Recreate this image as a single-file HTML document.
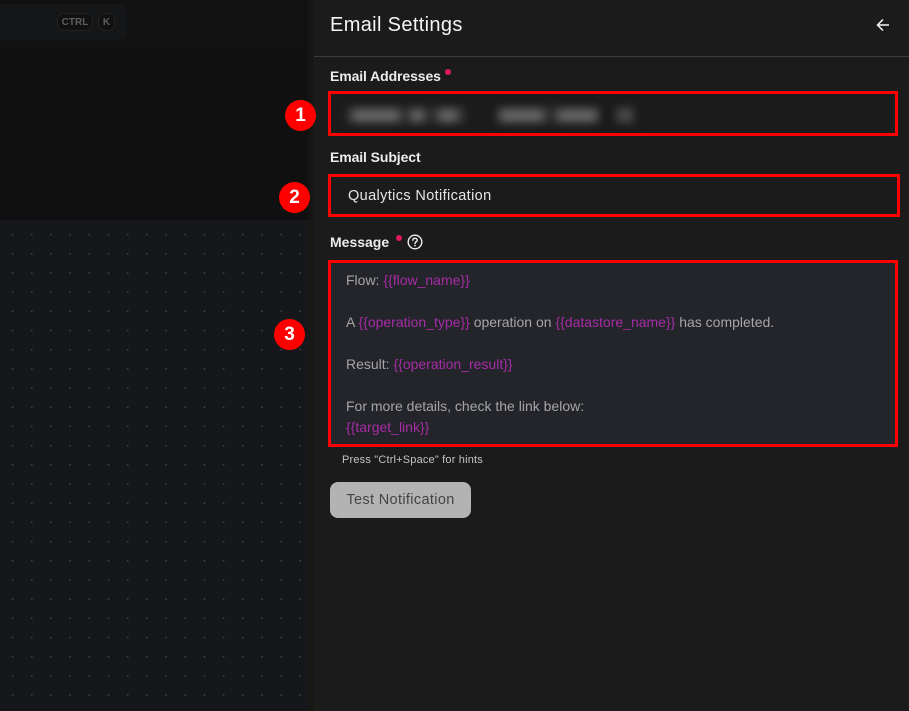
<!DOCTYPE html>
<html><head><meta charset="utf-8"><style>
html,body{margin:0;padding:0;background:#1b1b1b}
body{width:909px;height:711px;position:relative;overflow:hidden;font-family:"Liberation Sans",sans-serif}
.a{position:absolute}
.t{position:absolute;white-space:nowrap}
.lbl{font-size:14px;font-weight:700;color:#ececec;line-height:16px;left:330px;letter-spacing:-.1px}
.box{position:absolute;box-sizing:border-box;border:3px solid #f00}
.n{position:absolute;width:31px;height:31px;border-radius:50%;background:#f00;color:#fff;font-size:19px;font-weight:700;line-height:31px;text-align:center}
.m{position:absolute;left:346px;font-size:14px;line-height:20px;color:#a6a6a6;white-space:nowrap}
.m b{font-weight:400;color:#a62ca6}
.dot{position:absolute;width:6px;height:6px;border-radius:50%;background:#e0185e}
.b{position:absolute;background:#6a6a6a;filter:blur(4.5px);height:11px;top:110px;border-radius:4px}
.g{position:absolute;background:#2e2e2e;filter:blur(4px);height:18px;top:106px}
</style></head><body>
<div class="a" style="left:0;top:0;width:314px;height:220px;background:#101010"></div>
<div class="a" style="left:0;top:0;width:314px;height:50px;background:#111111"></div>
<div class="a" style="left:0;top:4px;width:127px;height:36px;background:#151618;border-radius:0 6px 6px 0"></div>
<div class="t" style="left:57px;top:13px;width:36px;height:18px;box-sizing:border-box;border:1px solid #222;border-radius:7px;background:#111;color:#5e5e5e;font-size:10px;font-weight:700;line-height:17px;text-align:center">CTRL</div>
<div class="t" style="left:98px;top:13px;width:17px;height:18px;box-sizing:border-box;border:1px solid #222;border-radius:7px;background:#111;color:#5e5e5e;font-size:10px;font-weight:700;line-height:17px;text-align:center">K</div>
<div class="a" style="left:0;top:220px;width:314px;height:491px;background-color:#16171a;background-image:radial-gradient(circle at 12.6px 14.6px,#46474a 0,#46474a .6px,transparent 1px);background-size:19.2px 19.2px"></div>
<div class="a" style="left:306px;top:0;width:8px;height:711px;background:linear-gradient(90deg,rgba(27,24,20,0),#1b1815)"></div>
<div class="a" style="left:314px;top:0;width:595px;height:711px;background:#1b1b1b"></div>
<div class="a" style="left:314px;top:56px;width:595px;height:1px;background:#3c3c3c"></div>

<div class="t" style="left:330px;top:13px;font-size:20px;line-height:24px;color:#f5f5f5;letter-spacing:.35px">Email Settings</div>
<svg class="a" style="left:876px;top:18px" width="14" height="14" viewBox="0 0 14 14" fill="none" stroke="#f5f5f5" stroke-width="1.5"><path d="M13 7H2M7 1.5 1.5 7 7 12.5"/></svg>

<div class="t lbl" style="top:68px">Email Addresses</div>
<div class="dot" style="left:445px;top:69px"></div>
<div class="box" style="left:328px;top:91px;width:570px;height:45px"></div>
<div class="g" style="left:346px;width:120px"></div>
<div class="g" style="left:496px;width:104px"></div>
<div class="g" style="left:614px;width:22px"></div>
<div class="b" style="left:352px;width:48px"></div>
<div class="b" style="left:410px;width:14px"></div>
<div class="b" style="left:438px;width:20px"></div>
<div class="b" style="left:500px;width:44px"></div>
<div class="b" style="left:557px;width:40px"></div>
<div class="b" style="left:619px;width:12px;background:#505050"></div>

<div class="t lbl" style="top:149px">Email Subject</div>
<div class="box" style="left:328px;top:174px;width:572px;height:43px"></div>
<div class="t" style="left:348px;top:188px;font-size:14.5px;line-height:16px;color:#e6e6e6;letter-spacing:.37px">Qualytics Notification</div>

<div class="t lbl" style="top:234px;letter-spacing:0">Message</div>
<div class="dot" style="left:396px;top:235px"></div>
<svg class="a" style="left:407px;top:234px" width="16" height="16" viewBox="0 0 16 16" fill="none" stroke="#efefef" stroke-width="1.4"><circle cx="8" cy="8" r="6.8"/><path d="M5.8 6.3C5.8 5 6.8 4.3 8 4.3S10.2 5.1 10.2 6.2C10.2 7.7 8 7.8 8 9.6" stroke-linecap="round"/><circle cx="8" cy="11.6" r=".5" fill="#efefef" stroke-width=".6"/></svg>

<div class="a" style="left:328px;top:260px;width:570px;height:187px;background:#24252a"></div>
<div class="box" style="left:328px;top:260px;width:570px;height:187px"></div>
<div class="m" style="top:270px">Flow: <b>{{flow_name}}</b></div>
<div class="m" style="top:312px">A <b>{{operation_type}}</b> operation on <b>{{datastore_name}}</b> has completed.</div>
<div class="m" style="top:354px">Result: <b>{{operation_result}}</b></div>
<div class="m" style="top:396px">For more details, check the link below:</div>
<div class="m" style="top:417px"><b>{{target_link}}</b></div>
<div class="t" style="left:342px;top:453px;font-size:11px;line-height:14px;color:#c4c4c4;letter-spacing:.18px">Press "Ctrl+Space" for hints</div>

<div class="a" style="left:330px;top:482px;width:141px;height:36px;border-radius:8px;background:#b3b3b3;color:#444;font-size:14.5px;line-height:37px;text-align:center;letter-spacing:.35px">Test Notification</div>

<div class="n" style="left:285px;top:100px">1</div>
<div class="n" style="left:279px;top:182px">2</div>
<div class="n" style="left:274px;top:319px">3</div>
</body></html>
